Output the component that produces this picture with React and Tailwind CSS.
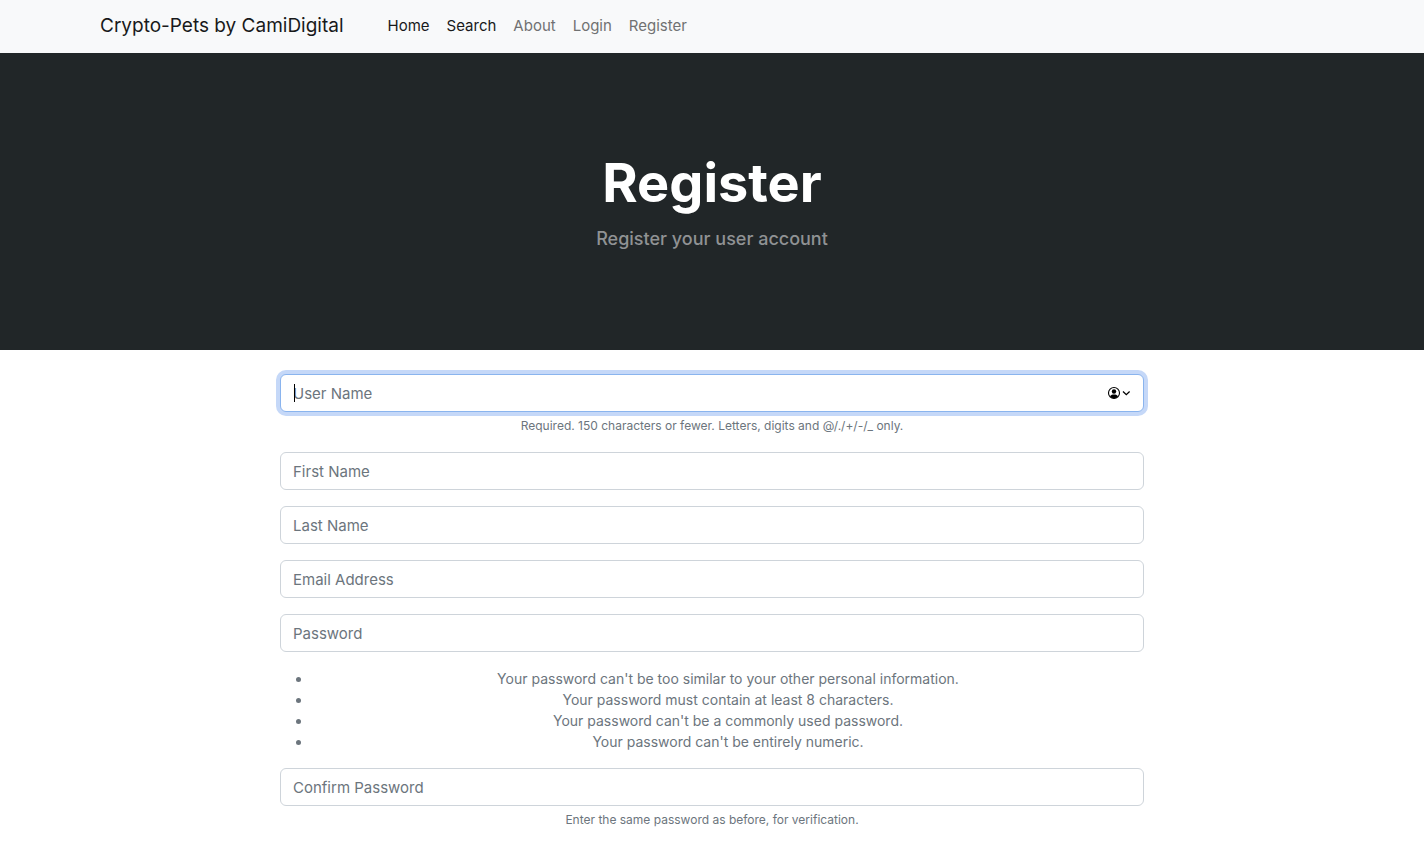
const links = [
  { label: "Home", active: true },
  { label: "Search", active: true },
  { label: "About" },
  { label: "Login" },
  { label: "Register" },
];

const passwordRules = [
  "Your password can't be too similar to your other personal information.",
  "Your password must contain at least 8 characters.",
  "Your password can't be a commonly used password.",
  "Your password can't be entirely numeric.",
];

const inputBase =
  "block h-[38px] w-full rounded-md border bg-white px-3 text-[15px] text-[#212529] outline-none placeholder:text-[#6c757d] placeholder:opacity-100";

function Field({ id, label, type = "text", focused = false, help, children }) {
  return (
    <div>
      <div className="relative">
        <input
          id={id}
          name={id}
          type={type}
          placeholder={label}
          aria-label={label}
          aria-describedby={help ? `${id}-help` : undefined}
          autoFocus={focused}
          className={`${inputBase} ${
            focused
              ? "border-[#8ab4ee] caret-transparent ring-4 ring-[#c5d8f8]"
              : "border-[#ced4da] focus:border-[#8ab4ee] focus:ring-4 focus:ring-[#c5d8f8]"
          }`}
        />
        {children}
      </div>
      {help && (
        <p id={`${id}-help`} className="mt-1 text-center text-[12px] leading-5 text-[#6c757d]">
          {help}
        </p>
      )}
    </div>
  );
}

function AccountMenuIcon() {
  return (
    <svg width="24" height="14" viewBox="0 0 24 14" fill="none" aria-hidden="true">
      <circle cx="7" cy="7" r="5.500" stroke="#000" strokeWidth="1.100" />
      <circle cx="7" cy="5.500" r="2.200" fill="#000" />
      <path d="M2.900 10.300C4 9 5.400 8.600 7 8.600s3 .4 4.100 1.700A5.400 5.400 0 0 1 7 12.400 5.400 5.400 0 0 1 2.900 10.300Z" fill="#000" />
      <path d="m16 5.500 3.300 3.200 3.300-3.200" stroke="#000" strokeWidth="1.300" />
    </svg>
  );
}

export default function App() {
  return (
    <div className="min-h-screen bg-white font-['Inter','Liberation_Sans',sans-serif] text-[#212529]">
      <nav className="bg-[#f8f9fa]">
        <div className="mx-auto flex h-[53px] max-w-[1320px] items-center px-12 pb-px">
          <a href="#" className="mr-11 text-[19px] leading-[30px] text-[#18191a]">
            Crypto-Pets by CamiDigital
          </a>
          <ul className="flex gap-[17px] text-[15px] leading-6">
            {links.map(({ label, active }) => (
              <li key={label}>
                <a href="#" className={active ? "text-[#18191a]" : "text-[#707172]"}>
                  {label}
                </a>
              </li>
            ))}
          </ul>
        </div>
      </nav>

      <header className="bg-[#212628] py-24 text-center">
        <h1 className="mb-2 text-[54px] leading-[67px] font-bold text-white">Register</h1>
        <p className="text-[18px] leading-[30px] font-medium text-[#909294]">
          Register your user account
        </p>
      </header>

      <main className="mx-auto max-w-[864px] pt-6 pb-4">
        <form className="flex flex-col gap-4">
          <Field
            id="username"
            label="User Name"
            focused
            help="Required. 150 characters or fewer. Letters, digits and @/./+/-/_ only."
          >
            <span
              aria-hidden="true"
              className="absolute top-2.5 left-3.5 h-[18px] w-px bg-black"
            />
            <button
              type="button"
              aria-label="Saved accounts"
              className="absolute inset-y-0 right-[13px] flex items-center"
            >
              <AccountMenuIcon />
            </button>
          </Field>
          <Field id="first_name" label="First Name" />
          <Field id="last_name" label="Last Name" />
          <Field id="email" label="Email Address" type="email" />
          <Field id="password1" label="Password" type="password" />
          <ul className="list-disc pl-8 text-center text-[14px] leading-[21px] text-[#6c757d]">
            {passwordRules.map((rule) => (
              <li key={rule}>{rule}</li>
            ))}
          </ul>
          <Field
            id="password2"
            label="Confirm Password"
            type="password"
            help="Enter the same password as before, for verification."
          />
        </form>
      </main>
    </div>
  );
}
